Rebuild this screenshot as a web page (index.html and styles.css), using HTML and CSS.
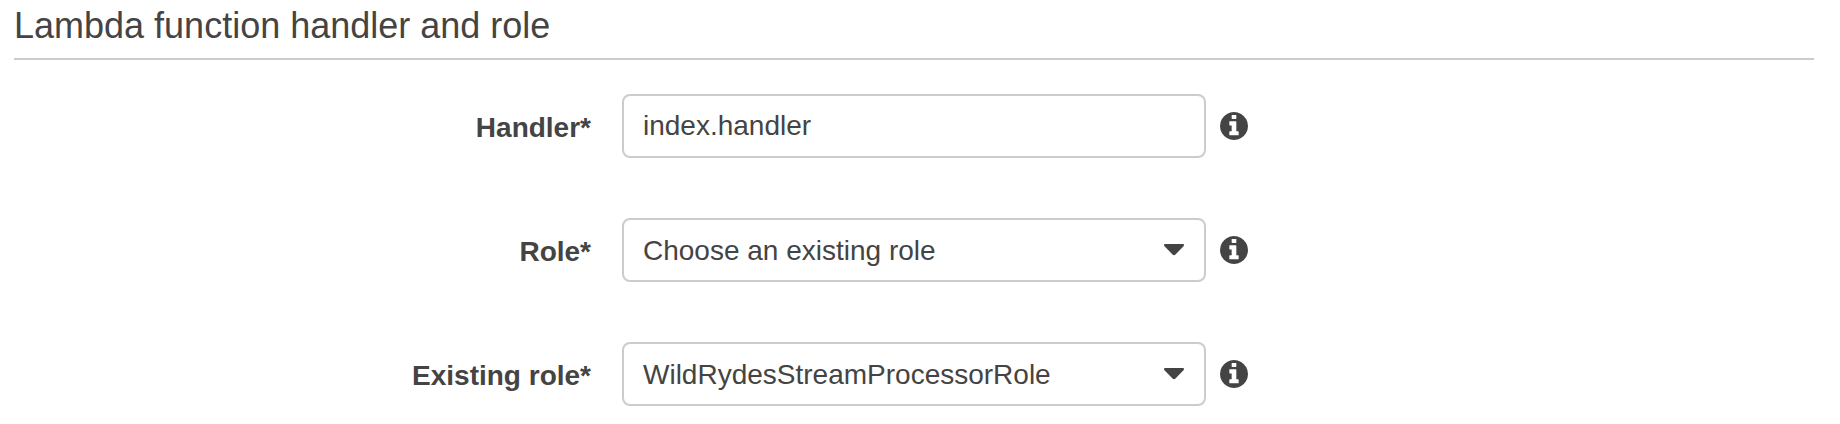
FILE: index.html
```html
<!DOCTYPE html>
<html lang="en">
<head>
<meta charset="utf-8">
<title>Lambda function handler and role</title>
<link rel="stylesheet" href="styles.css">
</head>
<body>
<svg class="defs" aria-hidden="true">
  <symbol id="info" viewBox="0 0 1536 1536">
    <path d="M1024 1248v-160q0-14-9-23t-23-9h-96V544q0-14-9-23t-23-9H544q-14 0-23 9t-9 23v160q0 14 9 23t23 9h96v320h-96q-14 0-23 9t-9 23v160q0 14 9 23t23 9h448q14 0 23-9t9-23zM896 352V192q0-14-9-23t-23-9H672q-14 0-23 9t-9 23v160q0 14 9 23t23 9h192q14 0 23-9t9-23zM1536 768q0 209-103 385.500T1153.500 1433 768 1536t-385.500-103T103 1153.500 0 768t103-385.500T382.500 103 768 0t385.500 103T1433 382.500 1536 768z"/>
  </symbol>
</svg>
<form class="section">
  <h2 class="title">Lambda function handler and role</h2>
  <div class="row">
    <label class="label" for="handler">Handler*</label>
    <div class="field">
      <input class="control" id="handler" type="text" value="index.handler" spellcheck="false">
    </div>
    <button class="info" type="button" aria-label="About the handler"><svg class="info-icon"><use href="#info"/></svg></button>
  </div>
  <div class="row">
    <label class="label" for="role">Role*</label>
    <div class="field">
      <select class="control" id="role"><option>Choose an existing role</option></select>
      <svg class="caret" viewBox="0 0 20 12" aria-hidden="true"><path d="M1 0H19Q20 0 20 1Q20 2 19 2.700L11.500 10.500Q10 12 8.500 10.500L1 2.700Q0 2 0 1Q0 0 1 0Z"/></svg>
    </div>
    <button class="info" type="button" aria-label="About the role"><svg class="info-icon"><use href="#info"/></svg></button>
  </div>
  <div class="row">
    <label class="label" for="existing-role">Existing role*</label>
    <div class="field">
      <select class="control" id="existing-role"><option>WildRydesStreamProcessorRole</option></select>
      <svg class="caret" viewBox="0 0 20 12" aria-hidden="true"><path d="M1 0H19Q20 0 20 1Q20 2 19 2.700L11.500 10.500Q10 12 8.500 10.500L1 2.700Q0 2 0 1Q0 0 1 0Z"/></svg>
    </div>
    <button class="info" type="button" aria-label="About the existing role"><svg class="info-icon"><use href="#info"/></svg></button>
  </div>
</form>
</body>
</html>
```
FILE: styles.css
```css
* {
  box-sizing: border-box;
}

body {
  margin: 0;
  background: #fff;
  color: #444;
  font-family: "Liberation Sans", Arial, sans-serif;
  font-size: 28px;
}

.defs {
  display: none;
}

.section {
  display: flex;
  flex-direction: column;
  gap: 60px;
  padding: 0 26px 18px 14px;
}

.title {
  margin: 0 0 -26px;
  padding: 6px 0 12px;
  border-bottom: 2px solid #ccc;
  font-size: 36px;
  font-weight: 400;
  line-height: 40px;
}

.row {
  display: grid;
  grid-template-columns: 1fr minmax(0, 584px) 1fr;
  align-items: center;
}

.label {
  padding: 4px 31px 0 0;
  font-weight: 700;
  line-height: 32px;
  text-align: right;
}

.field {
  position: relative;
}

.control {
  display: block;
  width: 100%;
  height: 64px;
  margin: 0;
  padding: 0 19px;
  border: 2px solid #ccc;
  border-radius: 8px;
  background: #fff;
  color: inherit;
  font: inherit;
  appearance: none;
}

.caret {
  position: absolute;
  top: 26px;
  right: 22px;
  width: 20px;
  height: 12px;
  fill: #444;
  pointer-events: none;
}

.info {
  display: flex;
  justify-self: start;
  margin: 0 0 0 14px;
  padding: 0;
  border: 0;
  background: none;
  color: inherit;
}

.info-icon {
  width: 28px;
  height: 28px;
  fill: currentColor;
}
```
